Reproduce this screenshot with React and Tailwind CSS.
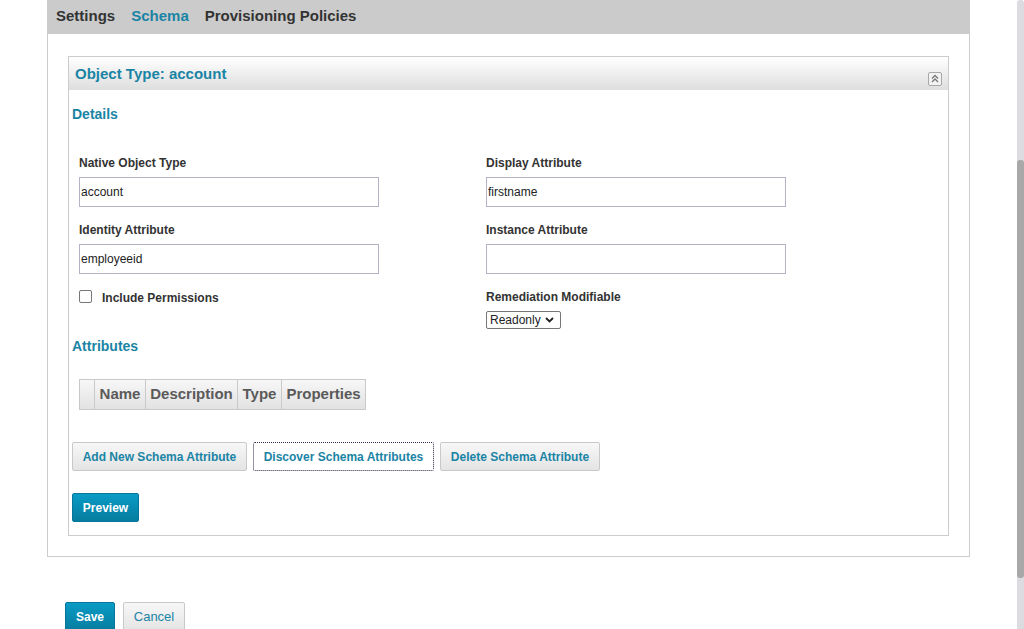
import React from "react";

const teal = "text-[#1a84a5]";

function Field({ label, value }) {
  return (
    <div className="flex flex-col">
      <label className="text-[12px] leading-[14px] font-bold text-[#333]">{label}</label>
      <input
        readOnly
        value={value}
        className="mt-[7px] w-[300px] h-[30px] border border-[#b3b3c6] px-[1px] text-[12px] text-[#222] outline-none bg-white"
      />
    </div>
  );
}

function LightButton({ children, focused, className = "" }) {
  return (
    <button
      className={`h-[29px] whitespace-nowrap flex items-center justify-center text-[12px] font-bold ${teal} rounded-[2px] ${
        focused
          ? "bg-white border border-dotted border-[#2b2b4a]"
          : "bg-gradient-to-b from-[#f7f7f7] to-[#e4e4e4] border border-[#c9c9c9]"
      } ${className}`}
    >
      {children}
    </button>
  );
}

function PrimaryButton({ children, className = "" }) {
  return (
    <button
      className={`text-[12px] font-bold text-white rounded-[2px] bg-gradient-to-b from-[#0a9bc6] to-[#067c9e] border border-[#06779a] ${className}`}
    >
      {children}
    </button>
  );
}

export default function App() {
  return (
    <div
      className="h-[629px] w-[1024px] overflow-hidden bg-white flex"
      style={{ fontFamily: '"Liberation Sans", Arial, sans-serif' }}
    >
      <div className="flex-1 pl-[47px]">
        <div className="w-[923px] border-x border-b border-[#cccccc]">
          <div className="h-[34px] bg-[#cbcbcb] flex items-center gap-[16px] pl-[8px] pb-[2px] text-[15px] font-bold">
            <span className="text-[#333]">Settings</span>
            <span className={teal}>Schema</span>
            <span className="text-[#333]">Provisioning Policies</span>
          </div>

          <div className="mx-[20px] mt-[22px] mb-[20px] border border-[#cccccc]">
            <div className="h-[33px] flex items-center justify-between px-[6px] bg-gradient-to-b from-white to-[#dedede]">
              <span className={`text-[15px] font-bold ${teal} mt-[1px]`}>Object Type: account</span>
              <div className="mt-[10px] w-[14px] h-[14px] border border-[#a8a8a8] rounded-[2px] bg-[#f3f3f3] flex items-center justify-center">
                <svg width="8" height="9" viewBox="0 0 8 9" fill="none" stroke="#777" strokeWidth="1.4">
                  <path d="M1 4.5 L4 1.5 L7 4.5" />
                  <path d="M1 8 L4 5 L7 8" />
                </svg>
              </div>
            </div>

            <div className="px-[3px] pb-[13px]">
              <div className={`mt-[16px] text-[14px] leading-[16px] font-bold ${teal}`}>Details</div>

              <div className="mt-[34px] pl-[7px] grid grid-cols-[407px_1fr]">
                <div className="flex flex-col gap-[16px]">
                  <Field label="Native Object Type" value="account" />
                  <Field label="Identity Attribute" value="employeeid" />
                  <div className="flex items-center h-[16px]">
                    <span className="w-[13px] h-[13px] border border-[#767676] rounded-[2px] bg-white -mt-[3px]" />
                    <span className="ml-[10px] text-[12px] font-bold text-[#333]">Include Permissions</span>
                  </div>
                </div>
                <div className="flex flex-col gap-[16px]">
                  <Field label="Display Attribute" value="firstname" />
                  <Field label="Instance Attribute" value="" />
                  <div className="flex flex-col -mt-[1px]">
                    <span className="text-[12px] leading-[16px] font-bold text-[#333]">Remediation Modifiable</span>
                    <div className="mt-[6px] w-[75px] h-[18px] border border-[#767676] rounded-[2px] flex items-center justify-between pl-[3px] pr-[6px] text-[12px] text-[#222]">
                      <span>Readonly</span>
                      <svg width="9" height="6" viewBox="0 0 9 6" fill="none" stroke="#222" strokeWidth="1.8">
                        <path d="M1 1 L4.5 4.5 L8 1" />
                      </svg>
                    </div>
                  </div>
                </div>
              </div>

              <div className={`mt-[9px] text-[14px] leading-[16px] font-bold ${teal}`}>Attributes</div>

              <div className="mt-[25px] ml-[7px] flex w-fit h-[31px] border border-[#c9c9c9] bg-gradient-to-b from-[#f7f7f7] to-[#e2e2e2] text-[15px] font-bold text-[#5a5a5a]">
                <div className="w-[15px] border-r border-[#c9c9c9]" />
                <div className="w-[51px] border-r border-[#c9c9c9] flex items-center justify-center">Name</div>
                <div className="w-[92px] border-r border-[#c9c9c9] flex items-center justify-center">Description</div>
                <div className="w-[44px] border-r border-[#c9c9c9] flex items-center justify-center">Type</div>
                <div className="w-[83px] flex items-center justify-center">Properties</div>
              </div>

              <div className="mt-[32px] flex gap-[6px]">
                <LightButton className="w-[175px]">Add New Schema Attribute</LightButton>
                <LightButton focused className="w-[181px]">Discover Schema Attributes</LightButton>
                <LightButton className="w-[160px]">Delete Schema Attribute</LightButton>
              </div>

              <PrimaryButton className="mt-[22px] w-[67px] h-[29px]">Preview</PrimaryButton>
            </div>
          </div>
        </div>

        <div className="mt-[45px] ml-[18px] flex gap-[8px]">
          <PrimaryButton className="w-[50px] h-[30px]">Save</PrimaryButton>
          <LightButton className="w-[62px] h-[30px] !font-normal !text-[13px]">Cancel</LightButton>
        </div>
      </div>

      <div className="w-[7px] h-full bg-[#dcdce0] rounded-t-[3px] flex flex-col">
        <div className="mt-[160px] h-[418px] bg-[#a8a8a8] rounded-[3px]" />
      </div>
    </div>
  );
}
